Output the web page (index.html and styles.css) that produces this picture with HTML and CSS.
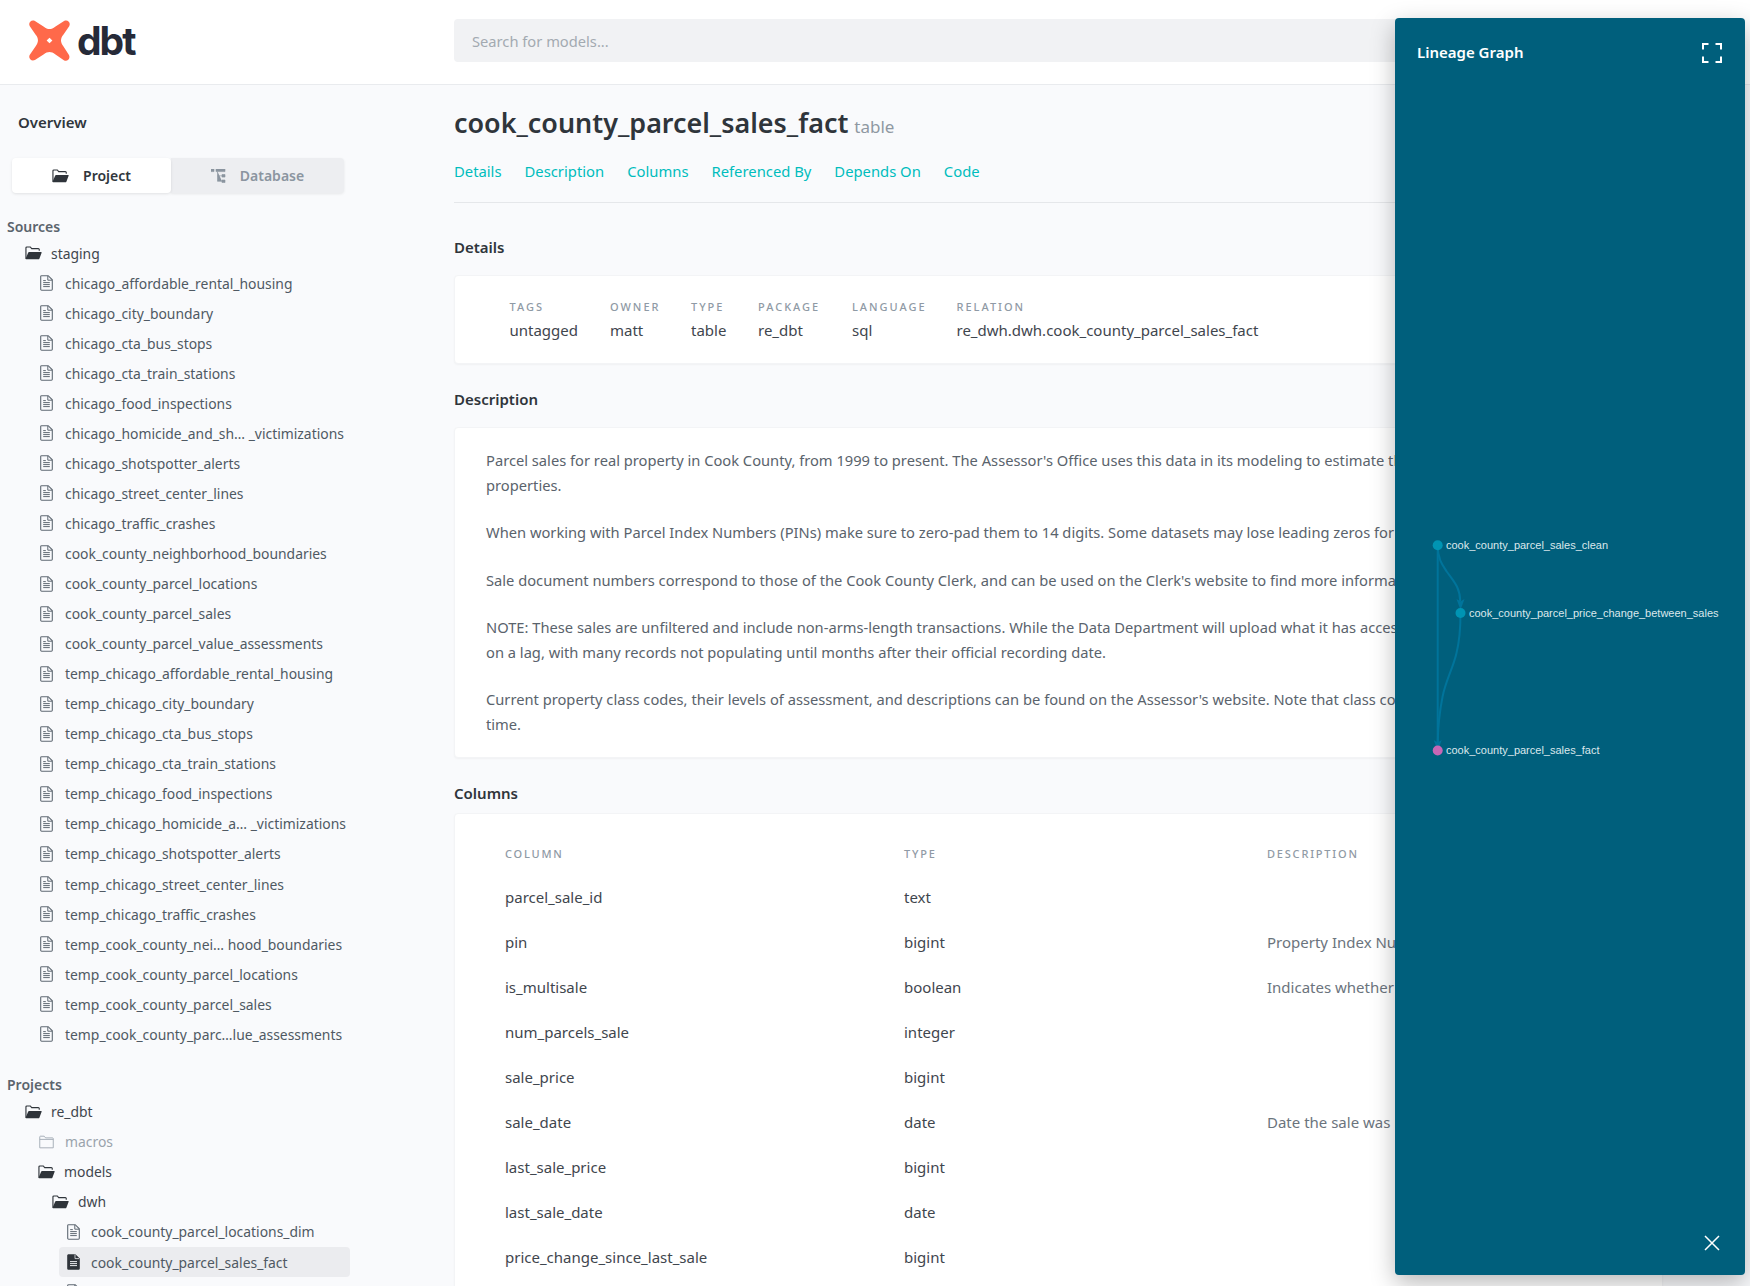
FILE: index.html
```html
<!DOCTYPE html>
<html lang="en">
<head>
<meta charset="UTF-8">
<title>dbt Docs</title>
<link rel="stylesheet" href="styles.css">
</head>
<body>

<svg class="defs" width="0" height="0">
  <symbol id="folder-open" viewBox="0 0 18 14">
    <path d="M1 13V1.6C1 1 1.4.6 2 .6h3.6l1.5 1.8h7c.6 0 1 .4 1 1v1.2" fill="none" stroke="currentColor" stroke-width="1.2"/>
    <path d="M.6 13.2c0 .3.2.5.5.5h13.2c.4 0 .7-.2.9-.6l2.4-6.3c.2-.5-.1-.9-.6-.9H4.3c-.4 0-.7.2-.9.6L.6 13.2z" fill="currentColor"/>
  </symbol>
  <symbol id="folder" viewBox="0 0 16 14">
    <path d="M.8 13.2V1.5c0-.4.3-.7.7-.7h4l1.5 1.8h7.5c.4 0 .7.3.7.7v9.9z" fill="none" stroke="currentColor" stroke-width="1"/>
    <path d="M.8 4.2h14.4" stroke="currentColor" stroke-width="1"/>
  </symbol>
  <symbol id="file" viewBox="0 0 13 16">
    <path d="M1.6.7h6.6l4.1 4.1v9.5c0 .5-.4.9-.9.9H1.6c-.5 0-.9-.4-.9-.9V1.6c0-.5.4-.9.9-.9z" fill="none" stroke="currentColor" stroke-width="1.1"/>
    <path d="M7.8.9v4.3h4.3M3.2 7.6h6.6M3.2 9.6h6.6M3.2 11.6h6.6M3.2 5.6h2.6" fill="none" stroke="currentColor" stroke-width="1"/>
  </symbol>
  <symbol id="file-solid" viewBox="0 0 13 16">
    <path d="M1.6.2h6.800l4.400 4.400v9.800c0 .8-.6 1.400-1.400 1.400H1.600c-.8 0-1.400-.6-1.400-1.400V1.600C.2.800.8.200 1.600.200z" fill="currentColor"/>
    <path d="M3 7.6h7M3 9.6h7M3 11.6h7" stroke="#ebecef" stroke-width="1"/>
    <path d="M8 .6v4h4" fill="none" stroke="#ebecef" stroke-width=".8"/>
  </symbol>
</svg>

<header class="topbar">
  <a class="logo">
    <svg class="logo-mark" viewBox="0 0 40 40">
      <path fill="#ff694a" d="M1.2 1.7C2.4.4 4.2.2 5.800 1L14.500 6.500C18 9.500 22 9.500 25.500 6.500L34.200 1C35.800.2 37.600.4 38.800 1.700 40 3 40 4.600 39.200 6L33.500 14.500C30.500 18 30.500 22 33.500 25.500L39 34.200C39.800 35.800 39.600 37.600 38.300 38.800 37 40 35.400 40 34 39.200L25.500 33.500C22 30.500 18 30.500 14.500 33.500L5.800 39C4.200 39.800 2.400 39.600 1.200 38.300 0 37 0 35.400.8 34L6.500 25.500C9.500 22 9.500 18 6.500 14.500L.8 6C0 4.600 0 3 1.200 1.700Z"/>
      <path fill="#fff" d="M20 17.200l2.800 2.800-2.800 2.800-2.800-2.800z"/>
    </svg>
    <span class="logo-word">dbt</span>
  </a>
  <div class="search">Search for models...</div>
</header>

<div class="page">
  <nav class="sidebar">
    <div class="overview">Overview</div>
    <div class="toggle">
      <div class="toggle-btn on"><svg class="ic-folder"><use href="#folder-open"/></svg>Project</div>
      <div class="toggle-btn off">
        <svg class="ic-tree" viewBox="0 0 15 14"><path d="M0 0h3v2.600H0zM5 0h9v2.600H5zM11 5.500h3v2.600h-3zM11 11h3v2.600h-3zM6.500 2.600v9.700H11M6.500 6.800H11" fill="currentColor" stroke="currentColor" stroke-width=".6"/></svg>Database
      </div>
    </div>

    <div class="tree-label">Sources</div>
    <div class="row d1"><svg class="ic-folder"><use href="#folder-open"/></svg>staging</div>
    <div class="row d2"><svg class="ic-file"><use href="#file"/></svg>chicago_affordable_rental_housing</div>
    <div class="row d2"><svg class="ic-file"><use href="#file"/></svg>chicago_city_boundary</div>
    <div class="row d2"><svg class="ic-file"><use href="#file"/></svg>chicago_cta_bus_stops</div>
    <div class="row d2"><svg class="ic-file"><use href="#file"/></svg>chicago_cta_train_stations</div>
    <div class="row d2"><svg class="ic-file"><use href="#file"/></svg>chicago_food_inspections</div>
    <div class="row d2"><svg class="ic-file"><use href="#file"/></svg>chicago_homicide_and_sh… _victimizations</div>
    <div class="row d2"><svg class="ic-file"><use href="#file"/></svg>chicago_shotspotter_alerts</div>
    <div class="row d2"><svg class="ic-file"><use href="#file"/></svg>chicago_street_center_lines</div>
    <div class="row d2"><svg class="ic-file"><use href="#file"/></svg>chicago_traffic_crashes</div>
    <div class="row d2"><svg class="ic-file"><use href="#file"/></svg>cook_county_neighborhood_boundaries</div>
    <div class="row d2"><svg class="ic-file"><use href="#file"/></svg>cook_county_parcel_locations</div>
    <div class="row d2"><svg class="ic-file"><use href="#file"/></svg>cook_county_parcel_sales</div>
    <div class="row d2"><svg class="ic-file"><use href="#file"/></svg>cook_county_parcel_value_assessments</div>
    <div class="row d2"><svg class="ic-file"><use href="#file"/></svg>temp_chicago_affordable_rental_housing</div>
    <div class="row d2"><svg class="ic-file"><use href="#file"/></svg>temp_chicago_city_boundary</div>
    <div class="row d2"><svg class="ic-file"><use href="#file"/></svg>temp_chicago_cta_bus_stops</div>
    <div class="row d2"><svg class="ic-file"><use href="#file"/></svg>temp_chicago_cta_train_stations</div>
    <div class="row d2"><svg class="ic-file"><use href="#file"/></svg>temp_chicago_food_inspections</div>
    <div class="row d2"><svg class="ic-file"><use href="#file"/></svg>temp_chicago_homicide_a… _victimizations</div>
    <div class="row d2"><svg class="ic-file"><use href="#file"/></svg>temp_chicago_shotspotter_alerts</div>
    <div class="row d2"><svg class="ic-file"><use href="#file"/></svg>temp_chicago_street_center_lines</div>
    <div class="row d2"><svg class="ic-file"><use href="#file"/></svg>temp_chicago_traffic_crashes</div>
    <div class="row d2"><svg class="ic-file"><use href="#file"/></svg>temp_cook_county_nei… hood_boundaries</div>
    <div class="row d2"><svg class="ic-file"><use href="#file"/></svg>temp_cook_county_parcel_locations</div>
    <div class="row d2"><svg class="ic-file"><use href="#file"/></svg>temp_cook_county_parcel_sales</div>
    <div class="row d2"><svg class="ic-file"><use href="#file"/></svg>temp_cook_county_parc…lue_assessments</div>

    <div class="tree-label projects">Projects</div>
    <div class="row d1"><svg class="ic-folder"><use href="#folder-open"/></svg>re_dbt</div>
    <div class="row d2 closed"><svg class="ic-file"><use href="#folder"/></svg>macros</div>
    <div class="row d2 open"><svg class="ic-folder"><use href="#folder-open"/></svg>models</div>
    <div class="row d3"><svg class="ic-folder"><use href="#folder-open"/></svg>dwh</div>
    <div class="row d4"><svg class="ic-file"><use href="#file"/></svg>cook_county_parcel_locations_dim</div>
    <div class="row d4 selected"><svg class="ic-file"><use href="#file-solid"/></svg>cook_county_parcel_sales_fact</div>
    <div class="row d4"><svg class="ic-file"><use href="#file"/></svg>dim_property_class</div>
  </nav>

  <main class="main">
    <h1 class="title">cook_county_parcel_sales_fact <small>table</small></h1>
    <div class="tabs">
      <a>Details</a><a>Description</a><a>Columns</a><a>Referenced By</a><a>Depends On</a><a>Code</a>
    </div>

    <h2 class="section-title first">Details</h2>
    <section class="card details">
      <dl class="meta"><dt>Tags</dt><dd>untagged</dd></dl>
      <dl class="meta"><dt>Owner</dt><dd>matt</dd></dl>
      <dl class="meta"><dt>Type</dt><dd>table</dd></dl>
      <dl class="meta"><dt>Package</dt><dd>re_dbt</dd></dl>
      <dl class="meta"><dt>Language</dt><dd>sql</dd></dl>
      <dl class="meta"><dt>Relation</dt><dd>re_dwh.dwh.cook_county_parcel_sales_fact</dd></dl>
    </section>

    <h2 class="section-title">Description</h2>
    <section class="card description">
      <p>Parcel sales for real property in Cook County, from 1999 to present. The Assessor's Office uses this data in its modeling to estimate the<br>properties.</p>
      <p>When working with Parcel Index Numbers (PINs) make sure to zero-pad them to 14 digits. Some datasets may lose leading zeros for</p>
      <p>Sale document numbers correspond to those of the Cook County Clerk, and can be used on the Clerk's website to find more information</p>
      <p>NOTE: These sales are unfiltered and include non-arms-length transactions. While the Data Department will upload what it has access<br>on a lag, with many records not populating until months after their official recording date.</p>
      <p>Current property class codes, their levels of assessment, and descriptions can be found on the Assessor's website. Note that class codes<br>time.</p>
    </section>

    <h2 class="section-title columns-title">Columns</h2>
    <section class="card columns">
      <div class="col-head"><span>Column</span><span>Type</span><span>Description</span></div>
      <div class="col-row"><span>parcel_sale_id</span><span>text</span><span></span></div>
      <div class="col-row"><span>pin</span><span>bigint</span><span class="muted">Property Index Number</span></div>
      <div class="col-row"><span>is_multisale</span><span>boolean</span><span class="muted">Indicates whether</span></div>
      <div class="col-row"><span>num_parcels_sale</span><span>integer</span><span></span></div>
      <div class="col-row"><span>sale_price</span><span>bigint</span><span></span></div>
      <div class="col-row"><span>sale_date</span><span>date</span><span class="muted">Date the sale was recorded</span></div>
      <div class="col-row"><span>last_sale_price</span><span>bigint</span><span></span></div>
      <div class="col-row"><span>last_sale_date</span><span>date</span><span></span></div>
      <div class="col-row"><span>price_change_since_last_sale</span><span>bigint</span><span></span></div>
    </section>
  </main>
</div>

<aside class="lineage">
  <div class="lineage-head">
    <span>Lineage Graph</span>
    <svg class="expand" viewBox="0 0 20 20"><path d="M1 6.500V1h5.500M13.500 1H19v5.500M1 13.500V19h5.500M13.500 19H19v-5.500" fill="none" stroke="#fff" stroke-width="2"/></svg>
  </div>
  <svg class="graph" viewBox="0 0 350 1257">
    <!-- offsets from the panel's top left corner -->
    <g fill="none" stroke="#00749b" stroke-width="2">
      <path d="M42.700 527.500V728"/>
      <path d="M42.700 527.500c0 14 5 20 9 26 7 10 13.500 16 13.500 30"/>
      <path d="M65.500 595c0 18-1 28-4 40-3 14-11 28-14 44-2 10-4.500 26-4.800 46"/>
    </g>
    <path d="M42.700 733l-4-11 4 2.500 4-2.500z" fill="#00749b"/>
    <path d="M65.500 592l-4-11 4 2.500 4-2.500z" fill="#00749b"/>
    <circle cx="42.700" cy="527.300" r="5" fill="#0094b3"/>
    <circle cx="65.500" cy="595" r="5" fill="#0094b3"/>
    <circle cx="42.700" cy="732.500" r="5" fill="#c867b5"/>
    <g class="graph-label">
      <text x="51" y="531">cook_county_parcel_sales_clean</text>
      <text x="74" y="599">cook_county_parcel_price_change_between_sales</text>
      <text x="51" y="736">cook_county_parcel_sales_fact</text>
    </g>
  </svg>
  <svg class="close" viewBox="0 0 16 16"><path d="M1 1l14 14M15 1L1 15" stroke="#fff" stroke-width="1.500"/></svg>
</aside>

</body>
</html>
```

FILE: styles.css
```css
html,body { margin:0; padding:0; height:1286px; overflow:hidden; background:#f9fafc; font-family:"Noto Sans",sans-serif; font-size:14px; color:#3f464e; }
.defs { position:absolute; }

.topbar { display:flex; align-items:center; height:81px; padding-bottom:3px; background:#fff; border-bottom:1px solid #e9ebee; }
.logo { display:flex; align-items:center; width:454px; padding-left:29px; box-sizing:border-box; }
.logo-mark { width:41px; height:41px; }
.logo-word { margin-left:7px; font-family:Inter,sans-serif; font-size:39px; font-weight:700; letter-spacing:-2px; line-height:41px; color:#262a38; }
.search { flex:1; margin-right:87px; height:43px; line-height:44px; padding-left:18px; background:#f1f2f4; border-radius:4px; color:#a3aab1; font-size:14.7px; }

.page { display:grid; grid-template-columns:454px 1fr; }

.sidebar { padding-top:28px; }
.overview { margin-left:18px; height:20px; line-height:18px; font-size:15px; font-weight:600; color:#30363c; }
.toggle { display:flex; margin:25px 0 0 12px; width:332px; height:35px; }
.toggle-btn { display:flex; align-items:center; justify-content:center; gap:14px; font-weight:600; line-height:35px; }
.toggle-btn .ic-folder { margin-right:0; }
.toggle-btn.on { width:159px; background:#fff; border-radius:4px; box-shadow:0 1px 3px rgba(0,0,0,.1); color:#30363c; z-index:1; }
.toggle-btn.off { width:173px; background:#edeef1; border-radius:0 4px 4px 0; box-shadow:0 1px 3px rgba(0,0,0,.08); color:#8b95a0; }
.ic-tree { width:15px; height:14px; }

.tree-label { margin:24px 0 1px 7px; height:20px; line-height:20px; font-weight:600; color:#5b646d; }
.tree-label.projects { margin:25.5px 0 2px 7px; }
.row { display:flex; align-items:center; height:30.06px; font-size:13.9px; color:#4f5963; white-space:nowrap; }
.ic-folder { width:17px; height:14px; margin-right:9px; color:#2f343a; flex:none; }
.ic-file { width:13px; height:16px; margin-right:12px; color:#5f6973; flex:none; }
.d1 { padding-left:25px; color:#3f464e; }
.d2 { padding-left:40px; }
.d2.open { padding-left:38px; color:#3f464e; }
.d2.closed { padding-left:39px; color:#9aa3ac; }
.d2.closed .ic-file { width:15px; height:14px; margin-right:11px; color:#a3acb5; }
.d3 { padding-left:52px; color:#3f464e; }
.d4 { padding-left:67px; color:#4f5963; }
.d4 .ic-file { margin-right:11px; }
.selected { margin-left:59px; width:291px; padding-left:8px; box-sizing:border-box; background:#ebecef; border-radius:4px; }
.selected .ic-file { color:#2f343a; }

.main { padding-right:87px; min-width:0; }
.title { margin:0; padding-top:23px; height:30px; line-height:30px; font-size:26.9px; font-weight:600; color:#2f353b; white-space:nowrap; }
.title small { margin-left:-1px; font-size:17px; font-weight:400; color:#8f98a2; }
.tabs { display:flex; gap:23px; margin-top:24px; height:40px; line-height:18px; font-size:14.8px; border-bottom:1px solid #e5e7ea; }
.tabs a { color:#00bdbd; }

.section-title { margin:26px 0 0; height:20px; line-height:18px; font-size:15px; font-weight:600; color:#2f353b; }
.section-title.first { margin-top:35px; }

.card { margin-top:17px; background:#fff; border:1px solid #f3f4f6; border-radius:4px; box-shadow:0 1px 2px rgba(0,0,0,.04); font-size:15px; }
.details { display:grid; grid-template-columns:100.5px 81px 67px 94px 104.5px auto; height:87px; padding-left:54.5px; }
.meta { margin:0; padding-top:21px; }
.meta dt { height:20px; line-height:20px; font-size:11px; font-weight:500; letter-spacing:2px; text-transform:uppercase; color:#8f9aa5; }
.meta dd { margin:2px 0 0; height:24px; line-height:22px; color:#3f464e; white-space:nowrap; }

.description { padding:20px 0 21px 31px; font-size:14.7px; }
.description p { margin:0 0 23px; line-height:24.5px; color:#5a636c; white-space:nowrap; }
.description p:last-child { margin-bottom:0; }

.columns { margin-top:9px; height:560px; padding:25px 0 0 50px; }
.col-head,.col-row { display:grid; grid-template-columns:399px 363px 1fr; white-space:nowrap; }
.col-head { height:30px; line-height:30px; margin-bottom:5.5px; font-size:11px; font-weight:500; letter-spacing:1.8px; text-transform:uppercase; color:#8f9aa5; }
.col-row { height:45.1px; line-height:44px; color:#3f464e; }
.muted { color:#6b747d; }

.lineage { position:absolute; left:1395px; top:18px; width:350px; height:1257px; background:#005f7c; border-radius:4px; box-shadow:0 8px 24px rgba(0,0,0,.28); overflow:hidden; }
.lineage-head { display:flex; justify-content:space-between; align-items:center; padding:25px 23px 0 22px; height:20px; color:#fff; font-size:15px; font-weight:600; }
.lineage-head span { margin-top:-2px; }
.expand { width:20px; height:20px; }
.graph { position:absolute; left:0; top:0; width:350px; height:1257px; }
.graph-label { font-family:"Liberation Sans",sans-serif; font-size:11px; fill:#dce8ec; }
.close { position:absolute; right:25px; bottom:24px; width:16px; height:16px; }
```
